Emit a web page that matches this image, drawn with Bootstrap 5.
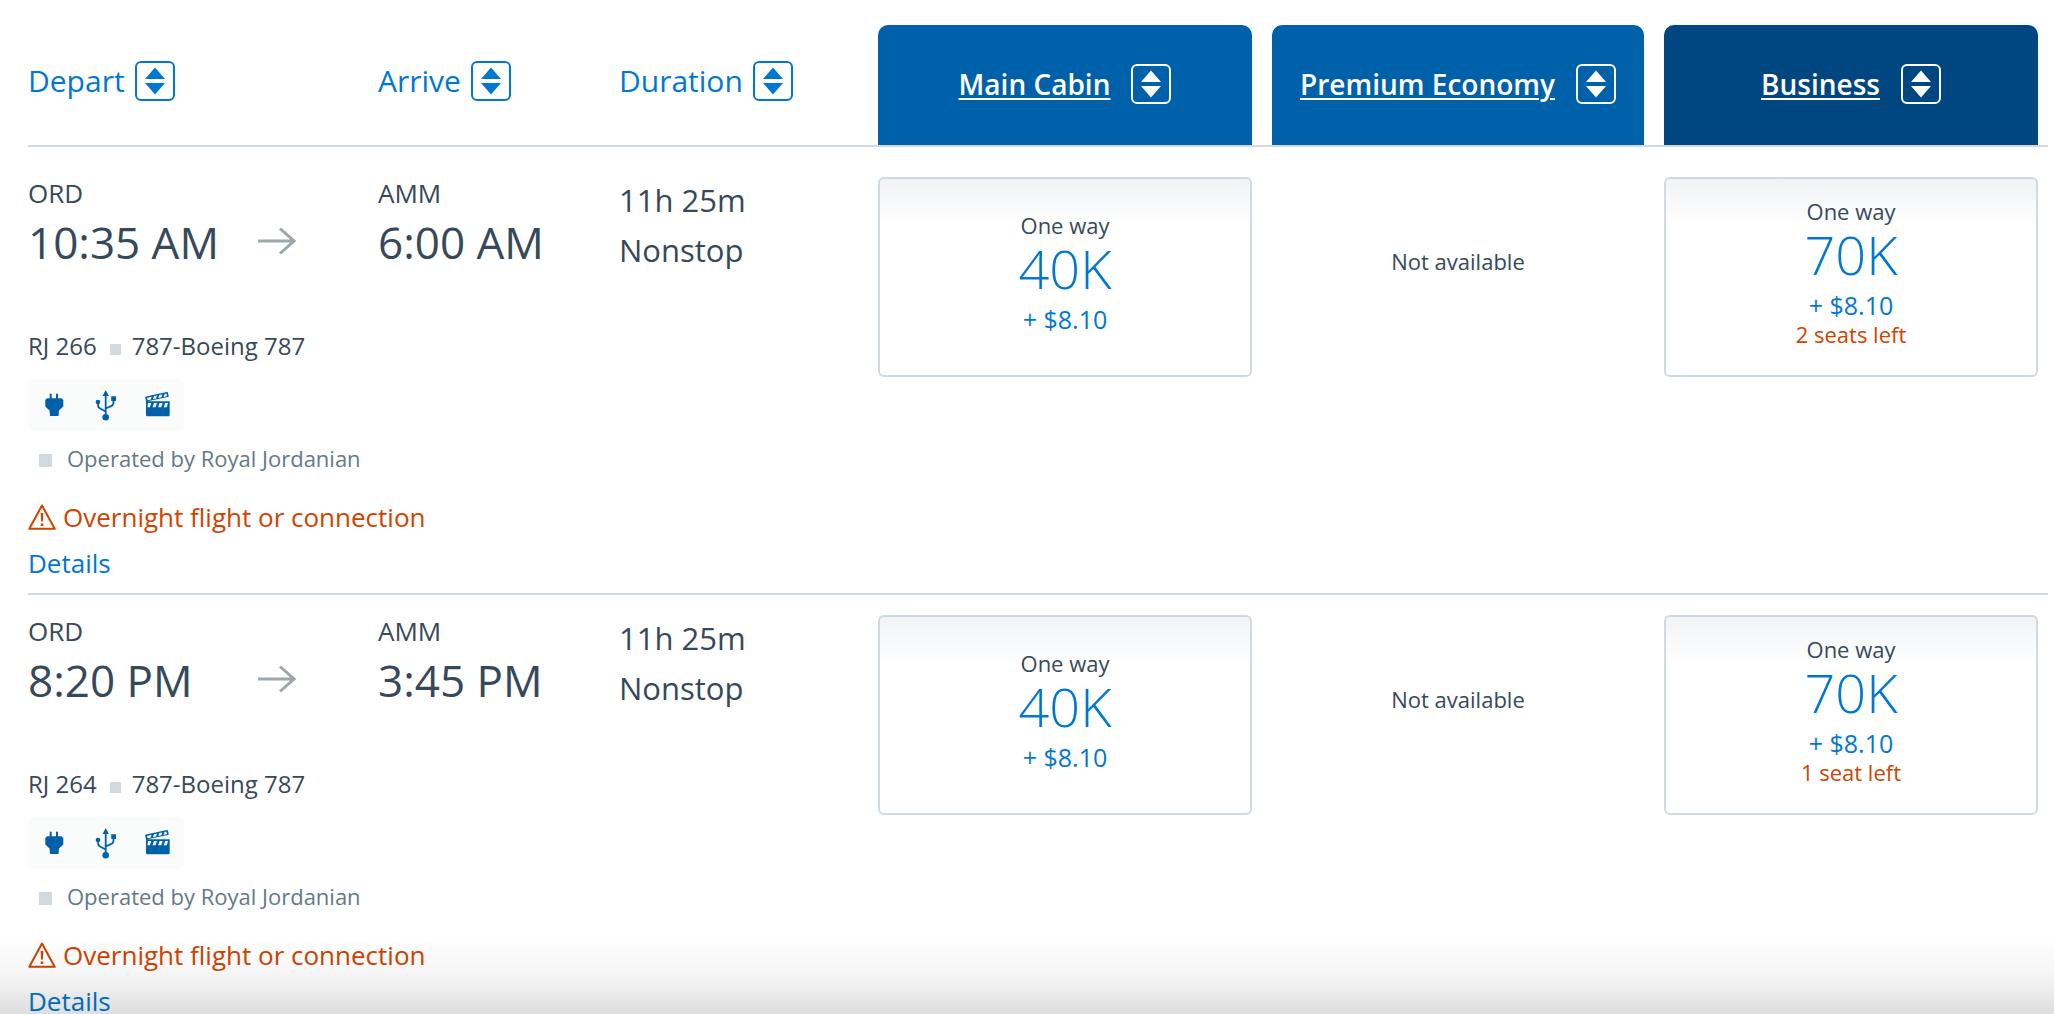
<!DOCTYPE html>
<html lang="en">
<head>
<meta charset="utf-8">
<meta name="viewport" content="width=device-width, initial-scale=1">
<title>Choose flights</title>
<link href="https://cdn.jsdelivr.net/npm/bootstrap@5.3.0/dist/css/bootstrap.min.css" rel="stylesheet">
<style>
:root { --ink: #36495a; --link: #0078d2; --rule: #d0dae0; --alert: #d14300; }
body { font-family: "Open Sans", "Noto Sans", sans-serif; font-weight: 400; color: var(--ink); background: #fff; }
button { font-weight: inherit; color: inherit; }
.results { height: 100vh; overflow-y: auto; scrollbar-width: none; padding: 0 6px 0 28px; }
.results::-webkit-scrollbar { display: none; }
.results-grid { display: grid; grid-template-columns: 830fr 374fr 372fr 374fr; column-gap: 20px; padding-right: 10px; border-bottom: 2px solid var(--rule); align-items: start; }
.trip-grid { display: grid; grid-template-columns: 230fr 120fr 241fr 239fr; }
.sort-head { padding-top: 25px; }
.sort-labels { height: 120px; padding-bottom: 8px; align-items: center; }
.sort-btn { font-size: 30px; line-height: 40px; color: var(--link); gap: 10px; }
.sort-icon { width: 40px; height: 40px; flex: none; }
.cabin-tab { height: 120px; padding-bottom: 4px; border-radius: 10px 10px 0 0; background: #0061ab; color: #fff; font-size: 28px; line-height: 40px; font-weight: 600; gap: 21px; }
.cabin-tab.premium-cabin { background: #004680; }
.cabin-tab span { text-decoration: underline; text-decoration-thickness: 2px; text-underline-offset: 3px; text-decoration-skip-ink: auto; }
.flight { padding-top: 20px; padding-bottom: 12px; }
.flight-first { padding-top: 30px; }
.airport { font-size: 26px; line-height: 32px; }
.clock { font-size: 44px; line-height: 66px; }
.span-text { font-size: 31px; line-height: 46px; }
.times { margin-bottom: 53px; }
.trip-arrow { margin-top: 50px; }
.plane { font-size: 24px; line-height: 36px; margin-bottom: 15px; }
.plane i { width: 11px; height: 11px; margin: 0 11px 0 13px; background: var(--rule); }
.amenities { background: #fafcfb; border-radius: 6px; color: #0061ab; margin-bottom: 12px; }
.carrier { font-size: 22px; line-height: 30px; color: #627a88; padding-left: 11px; margin-bottom: 26px; }
.carrier i { width: 13px; height: 13px; margin-right: 15px; background: var(--rule); }
.notice { font-size: 26px; line-height: 36px; color: var(--alert); gap: 7px; margin-bottom: 10px; }
.details-link { font-size: 26px; line-height: 36px; color: var(--link); }
.fare { min-height: 200px; padding: 0 0 10px; border: 2px solid var(--rule); border-radius: 6px; background: linear-gradient(#f1f3f6, #fff 46px); }
.fare-none { min-height: 168px; font-size: 22px; line-height: 30px; }
.fare-type { font-size: 22px; line-height: 28px; }
.fare-miles { font-size: 54px; line-height: 58px; font-weight: 300; color: var(--link); }
.fare-tax { font-size: 25px; line-height: 30px; margin-top: 7px; color: var(--link); }
.fare-seats { font-size: 22px; line-height: 28px; color: var(--alert); }
.fade-edge { height: 76px; pointer-events: none; background: linear-gradient(rgba(0,0,0,0), rgba(0,0,0,.04) 50%, rgba(0,0,0,.13)); }
</style>
<script src="https://cdn.jsdelivr.net/npm/bootstrap@5.3.0/dist/js/bootstrap.bundle.min.js"></script>
</head>
<body>
<svg class="d-none" aria-hidden="true">
  <symbol id="sort" viewBox="0 0 40 40"><rect x="1" y="1" width="38" height="38" rx="5" fill="none" stroke="currentColor" stroke-width="2"/><path d="M20 6.5 30 18H10zM10 22h20L20 33.5z" fill="currentColor"/></symbol>
  <symbol id="arrow" viewBox="0 0 38 28"><path d="M0 14H35M22 1.500 36 14 22 26.500" fill="none" stroke="#9da6ab" stroke-width="3"/></symbol>
  <symbol id="plug" viewBox="0 0 52 52"><path d="M22.700 15.500V21M29 15.500V21" stroke="currentColor" stroke-width="2" stroke-linecap="round"/><path d="M19 19.300H33.500L35.300 21V27.500L31 31.500 30.500 37H22L21.500 31.500 17.300 27.500V21z" fill="currentColor"/></symbol>
  <symbol id="usb" viewBox="0 0 52 52"><path d="M25.700 15V37M18 24V26Q18 28.500 20.500 29.700L25.700 32.500M33.500 21V23.500Q33.500 26 31 27.200L25.700 29.500" fill="none" stroke="currentColor" stroke-width="1.800"/><path d="M25.700 11 28.900 17H22.500zM31.200 17.300H36V21.900H31.200z" fill="currentColor"/><circle cx="18" cy="23" r="2.300" fill="currentColor"/><circle cx="25.700" cy="38.300" r="3.300" fill="currentColor"/></symbol>
  <symbol id="clapper" viewBox="0 0 52 52"><path fill="currentColor" fill-rule="evenodd" d="M13.200 18.500Q13.200 17.600 14 17.400L34.800 13Q35.700 12.800 35.900 13.600L36.800 17.700 15.500 22.300H37.700V36Q37.700 37.300 36.400 37.300H15.300Q14 37.300 14 36V22.500zM15 19 15.700 21.300 18.600 20.700 19.600 17.700zM22 17.200 20.800 20.200 24 19.500 25 16.600zM27.300 16 26.300 19 29.400 18.300 30.400 15.400zM32.600 15 31.600 17.900 35 17.100 34.400 14.600zM16 24 15.500 28.300H17.800L19.300 24zM22 24 20.500 28.300H23.500L25 24zM27.600 24 26.100 28.300H29.200L30.700 24zM33.200 24 31.700 28.300H34.700L36 24z"/></symbol>
  <symbol id="alert" viewBox="0 0 28 26"><path d="M14 1.500 26.700 24.800H1.300z" fill="none" stroke="currentColor" stroke-width="2" stroke-linejoin="round"/><path d="M12.700 9h2.600l-.4 8.500h-1.800zM12.700 19.500h2.600v2.400h-2.600z" fill="currentColor"/></symbol>
</svg>

<main class="results">
  <header class="results-grid sort-head">
    <div class="trip-grid sort-labels">
      <button type="button" class="sort-btn d-flex align-items-center border-0 bg-transparent p-0">Depart<svg class="sort-icon" aria-hidden="true"><use href="#sort"/></svg></button>
      <span></span>
      <button type="button" class="sort-btn d-flex align-items-center border-0 bg-transparent p-0">Arrive<svg class="sort-icon" aria-hidden="true"><use href="#sort"/></svg></button>
      <button type="button" class="sort-btn d-flex align-items-center border-0 bg-transparent p-0">Duration<svg class="sort-icon" aria-hidden="true"><use href="#sort"/></svg></button>
    </div>
    <button type="button" class="cabin-tab d-flex align-items-center justify-content-center border-0"><span>Main Cabin</span><svg class="sort-icon" aria-hidden="true"><use href="#sort"/></svg></button>
    <button type="button" class="cabin-tab d-flex align-items-center justify-content-center border-0"><span>Premium Economy</span><svg class="sort-icon" aria-hidden="true"><use href="#sort"/></svg></button>
    <button type="button" class="cabin-tab premium-cabin d-flex align-items-center justify-content-center border-0"><span>Business</span><svg class="sort-icon" aria-hidden="true"><use href="#sort"/></svg></button>
  </header>

  <section class="results-grid flight flight-first" aria-label="Flight RJ 266">
    <div>
      <div class="trip-grid times">
        <div><div class="airport">ORD</div><div class="clock">10:35 AM</div></div>
        <svg class="trip-arrow" width="38" height="28" aria-hidden="true"><use href="#arrow"/></svg>
        <div><div class="airport">AMM</div><div class="clock">6:00 AM</div></div>
        <div class="span-text d-grid gap-1 align-content-start"><div>11h 25m</div><div>Nonstop</div></div>
      </div>
      <div class="plane d-flex align-items-baseline"><span>RJ 266</span><i></i><span>787-Boeing 787</span></div>
      <div class="d-flex">
        <div class="amenities d-flex">
          <svg width="52" height="52" role="img" aria-label="Power"><use href="#plug"/></svg>
          <svg width="52" height="52" role="img" aria-label="USB"><use href="#usb"/></svg>
          <svg width="52" height="52" role="img" aria-label="Entertainment"><use href="#clapper"/></svg>
        </div>
      </div>
      <div class="carrier d-flex align-items-baseline"><i></i><span>Operated by Royal Jordanian</span></div>
      <div class="notice d-flex align-items-center"><svg width="28" height="26" aria-hidden="true"><use href="#alert"/></svg><span>Overnight flight or connection</span></div>
      <a href="#" class="details-link d-inline-block text-decoration-none align-top">Details</a>
    </div>
    <button type="button" class="fare d-flex flex-column align-items-center justify-content-center">
      <span class="fare-type">One way</span><span class="fare-miles">40K</span><span class="fare-tax">+ $8.10</span>
    </button>
    <div class="fare-none d-flex align-items-center justify-content-center">Not available</div>
    <button type="button" class="fare d-flex flex-column align-items-center justify-content-center">
      <span class="fare-type">One way</span><span class="fare-miles">70K</span><span class="fare-tax">+ $8.10</span><span class="fare-seats">2 seats left</span>
    </button>
  </section>

  <section class="results-grid flight" aria-label="Flight RJ 264">
    <div>
      <div class="trip-grid times">
        <div><div class="airport">ORD</div><div class="clock">8:20 PM</div></div>
        <svg class="trip-arrow" width="38" height="28" aria-hidden="true"><use href="#arrow"/></svg>
        <div><div class="airport">AMM</div><div class="clock">3:45 PM</div></div>
        <div class="span-text d-grid gap-1 align-content-start"><div>11h 25m</div><div>Nonstop</div></div>
      </div>
      <div class="plane d-flex align-items-baseline"><span>RJ 264</span><i></i><span>787-Boeing 787</span></div>
      <div class="d-flex">
        <div class="amenities d-flex">
          <svg width="52" height="52" role="img" aria-label="Power"><use href="#plug"/></svg>
          <svg width="52" height="52" role="img" aria-label="USB"><use href="#usb"/></svg>
          <svg width="52" height="52" role="img" aria-label="Entertainment"><use href="#clapper"/></svg>
        </div>
      </div>
      <div class="carrier d-flex align-items-baseline"><i></i><span>Operated by Royal Jordanian</span></div>
      <div class="notice d-flex align-items-center"><svg width="28" height="26" aria-hidden="true"><use href="#alert"/></svg><span>Overnight flight or connection</span></div>
      <a href="#" class="details-link d-inline-block text-decoration-none align-top">Details</a>
    </div>
    <button type="button" class="fare d-flex flex-column align-items-center justify-content-center">
      <span class="fare-type">One way</span><span class="fare-miles">40K</span><span class="fare-tax">+ $8.10</span>
    </button>
    <div class="fare-none d-flex align-items-center justify-content-center">Not available</div>
    <button type="button" class="fare d-flex flex-column align-items-center justify-content-center">
      <span class="fare-type">One way</span><span class="fare-miles">70K</span><span class="fare-tax">+ $8.10</span><span class="fare-seats">1 seat left</span>
    </button>
  </section>
</main>
<div class="fade-edge fixed-bottom"></div>
</body>
</html>
